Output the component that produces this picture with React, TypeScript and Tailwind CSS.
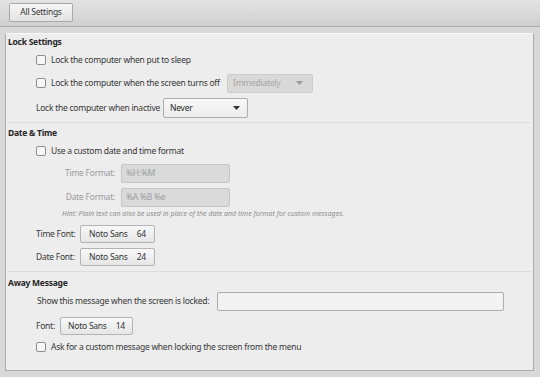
import type { ReactNode } from "react";

const FONT = { fontFamily: '"Noto Sans", "Open Sans", sans-serif' };

function Checkbox() {
  return (
    <span className="h-[10px] w-[10px] shrink-0 rounded-[2px] border border-[#8e8e8e] bg-[#f7f7f7]" />
  );
}

function Arrow({ muted }: { muted?: boolean }) {
  return (
    <svg width="7" height="4" viewBox="0 0 7 4" className="shrink-0">
      <path d="M0 0h7L3.5 4z" fill={muted ? "#9c9c9c" : "#333"} />
    </svg>
  );
}

function FontButton({ name, size, w }: { name: string; size: number; w: string }) {
  return (
    <button
      className={`flex h-[18px] ${w} items-center justify-center gap-[9px] rounded-[2px] border border-[#b3b3b3] bg-gradient-to-b from-[#f8f8f8] to-[#e6e6e6] text-[#333]`}
    >
      <span>{name}</span>
      <span>{size}</span>
    </button>
  );
}

function Section({ title, children, last }: { title: string; children: ReactNode; last?: boolean }) {
  return (
    <section className={last ? "" : "border-b border-[#dddddd]"}>
      <h2 className="h-[12px] font-bold leading-[12px] text-[#262626]">{title}</h2>
      {children}
    </section>
  );
}

export default function App() {
  return (
    <div
      style={FONT}
      className="h-[377px] w-[540px] overflow-hidden whitespace-nowrap bg-[#d8d8d8] text-[8.5px] tracking-[-0.25px] text-[#363636]"
    >
      {/* toolbar */}
      <div className="h-[27px] border-b border-[#ababab] bg-gradient-to-b from-[#e3e3e3] to-[#cfcfcf] pl-[9px] pt-[3px]">
        <button className="h-[19px] w-[64px] rounded-[2px] border border-[#a9a9a9] bg-gradient-to-b from-[#f7f7f7] to-[#e2e2e2] text-[#333]">
          All Settings
        </button>
      </div>

      <div className="mx-[5px] mt-[6px] h-[338px] w-[529px] border border-[#ababab] border-t-[#fbfbfb] bg-[#ededed] px-[2px]">
        {/* Lock Settings */}
        <div className="pt-[2px]">
          <Section title="Lock Settings">
            <div className="mt-[2px] flex h-[20px] items-center gap-[5px] pl-[28px]">
              <Checkbox />
              <span>Lock the computer when put to sleep</span>
            </div>
            <div className="mt-[3px] flex h-[20px] items-center pl-[28px]">
              <Checkbox />
              <span className="w-[181px] pl-[5px]">Lock the computer when the screen turns off</span>
              <div className="flex h-[19px] w-[86px] items-center justify-between rounded-[2px] border border-[#cdcdcd] bg-[#d9d9d9] pl-[5px] pr-[9px] text-[#a6a6a6]">
                <span>Immediately</span>
                <Arrow muted />
              </div>
            </div>
            <div className="mt-[5px] mb-[4px] flex h-[20px] items-center pl-[28px]">
              <span className="w-[127px]">Lock the computer when inactive</span>
              <div className="flex h-[20px] w-[85px] items-center justify-between rounded-[2px] border border-[#adadad] bg-gradient-to-b from-[#f8f8f8] to-[#ececec] pl-[6px] pr-[7px] text-[#262626]">
                <span>Never</span>
                <Arrow />
              </div>
            </div>
          </Section>
        </div>

        {/* Date & Time */}
        <div className="pt-[4px]">
          <Section title="Date & Time">
            <div className="mt-[2px] flex h-[20px] items-center gap-[5px] pl-[28px]">
              <Checkbox />
              <span>Use a custom date and time format</span>
            </div>
            <div className="mt-[3px] flex h-[19px] items-center pl-[28px]">
              <span className="w-[79px] text-right text-[#9a9a9a]">Time Format:</span>
              <div className="ml-[6px] flex h-[19px] w-[109px] items-center rounded-[2px] border border-[#c6c6c6] bg-[#dadada] pl-[4px] text-[#9c9c9c]">
                %H:%M
              </div>
            </div>
            <div className="mt-[5px] flex h-[19px] items-center pl-[28px]">
              <span className="w-[79px] text-right text-[#9a9a9a]">Date Format:</span>
              <div className="ml-[6px] flex h-[19px] w-[109px] items-center rounded-[2px] border border-[#c6c6c6] bg-[#dadada] pl-[4px] text-[#9c9c9c]">
                %A %B %e
              </div>
            </div>
            <p className="mt-[2px] h-[10px] pl-[54px] text-[7px] italic leading-[10px] tracking-normal text-[#8e8e8e]">
              Hint: Plain text can also be used in place of the date and time format for custom messages.
            </p>
            <div className="mt-[6px] flex h-[18px] items-center pl-[28px]">
              <span className="w-[44px]">Time Font:</span>
              <FontButton name="Noto Sans" size={64} w="w-[75px]" />
            </div>
            <div className="mt-[5px] mb-[5px] flex h-[18px] items-center pl-[28px]">
              <span className="w-[44px]">Date Font:</span>
              <FontButton name="Noto Sans" size={24} w="w-[75px]" />
            </div>
          </Section>
        </div>

        {/* Away Message */}
        <div className="pt-[5px]">
          <Section title="Away Message" last>
            <div className="mt-[3px] flex h-[19px] items-center pl-[29px]">
              <span className="w-[180px]">Show this message when the screen is locked:</span>
              <div className="h-[19px] w-[287px] rounded-[2px] border border-[#adadad] bg-[#f3f3f3]" />
            </div>
            <div className="mt-[6px] flex h-[18px] items-center pl-[28px]">
              <span className="w-[24px]">Font:</span>
              <FontButton name="Noto Sans" size={14} w="w-[73px]" />
            </div>
            <div className="mt-[3px] flex h-[18px] items-center gap-[5px] pl-[28px]">
              <Checkbox />
              <span>Ask for a custom message when locking the screen from the menu</span>
            </div>
          </Section>
        </div>
      </div>
    </div>
  );
}
